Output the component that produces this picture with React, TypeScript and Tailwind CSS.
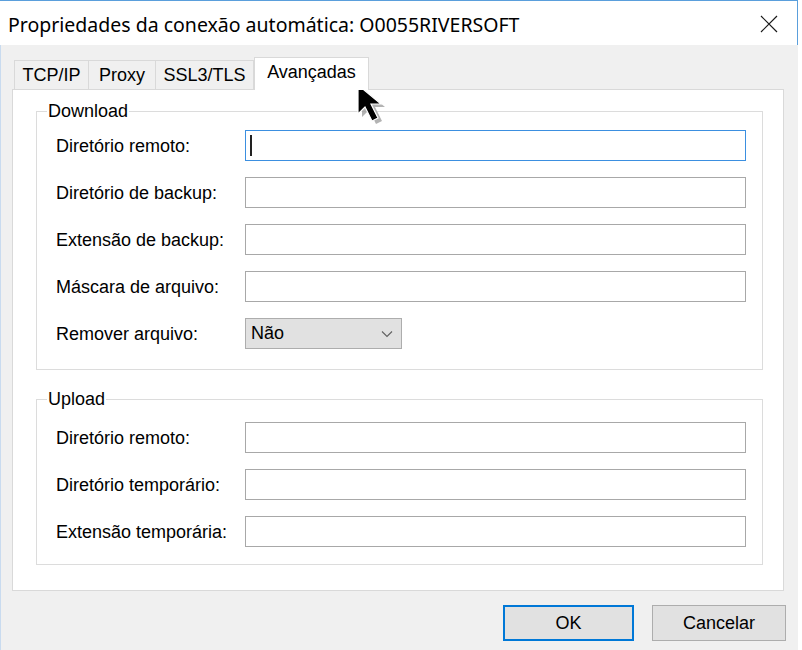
import React from "react";

const font = { fontFamily: '"Liberation Sans", Arial, sans-serif' };

function Field({ label, focused }: { label: string; focused?: boolean }) {
  return (
    <div className="flex items-center h-[31px]">
      <div className="w-[189px] text-[18px] leading-[22px] text-black">{label}</div>
      <div
        className={
          "w-[501px] h-[31px] bg-white border flex items-center " +
          (focused ? "border-[#3b8fe0]" : "border-[#a8a8a8]")
        }
      >
        {focused && <div className="ml-[4px] w-[2px] h-[21px] bg-[#222]" />}
      </div>
    </div>
  );
}

function Tab({ label, w, selected, right }: { label: string; w: string; selected?: boolean; right?: boolean }) {
  return (
    <div
      className={
        "flex items-center justify-center text-[18px] text-black border-t border-l border-[#d9d9d9] " +
        w +
        " " +
        (selected ? "h-[33px] bg-white border-r pb-[4px]" : "h-[29px] mb-[1px] bg-[#f0f0f0]") +
        (right ? " border-r" : "")
      }
    >
      {label}
    </div>
  );
}

export default function App() {
  return (
    <div className="w-[802px] h-[650px] bg-white relative overflow-hidden" style={font}>
      <div className="w-[798px] h-[650px] flex flex-col">
        {/* Title bar */}
        <div className="h-[45px] shrink-0 flex items-center justify-between bg-white border-t border-r border-[#5a9fdc] pl-[8px] pr-[19px]">
          <span
            className="text-[19.5px] text-black leading-[26px] mt-[3px]"
            style={{ fontFamily: '"Noto Sans", "Open Sans", sans-serif' }}
          >
            Propriedades da conexão automática: O0055RIVERSOFT
          </span>
          <svg width="18" height="18" viewBox="0 0 18 18" className="mt-[2px]">
            <path d="M1 1 L17 17 M17 1 L1 17" stroke="#1a1a1a" strokeWidth="1.2" fill="none" />
          </svg>
        </div>

        {/* Body */}
        <div className="flex-1 bg-[#f0f0f0] border-l border-[#c9dbef] flex flex-col">
          {/* Tabs */}
          <div className="relative z-10 flex items-end h-[33px] mt-[12px] -mb-px ml-[13px]">
            <Tab label="TCP/IP" w="w-[74px]" />
            <Tab label="Proxy" w="w-[67px]" />
            <Tab label="SSL3/TLS" w="w-[99px]" right />
            <Tab label="Avançadas" w="w-[115px]" selected />
          </div>

          {/* Panel */}
          <div className="ml-[11px] w-[772px] h-[502px] bg-white border border-[#d9d9d9] flex flex-col">
            {/* Download group */}
            <div className="ml-[23px] mt-[21px] w-[727px] border border-[#dcdcdc] flex flex-col pl-[19px] pb-[20px]">
              <span className="-mt-[12px] -ml-[9px] px-[1px] bg-white w-fit text-[18px] leading-[22px] text-black">
                Download
              </span>
              <div className="mt-[8px] flex flex-col gap-[16px]">
                <Field label="Diretório remoto:" focused />
                <Field label="Diretório de backup:" />
                <Field label="Extensão de backup:" />
                <Field label="Máscara de arquivo:" />
                <div className="flex items-center h-[31px]">
                  <div className="w-[189px] text-[18px] leading-[22px] text-black">Remover arquivo:</div>
                  <div className="w-[157px] h-[31px] bg-[#e1e1e1] border border-[#adadad] flex items-center justify-between pl-[5px] pr-[8px]">
                    <span className="text-[18px] text-black">Não</span>
                    <svg width="12" height="8" viewBox="0 0 12 8">
                      <path d="M1 1.5 L6 6.5 L11 1.5" stroke="#606060" strokeWidth="1.1" fill="none" />
                    </svg>
                  </div>
                </div>
              </div>
            </div>

            {/* Upload group */}
            <div className="ml-[23px] mt-[29px] w-[727px] border border-[#dcdcdc] flex flex-col pl-[19px] pb-[17px]">
              <span className="-mt-[12px] -ml-[9px] px-[1px] bg-white w-fit text-[18px] leading-[22px] text-black">
                Upload
              </span>
              <div className="mt-[12px] flex flex-col gap-[16px]">
                <Field label="Diretório remoto:" />
                <Field label="Diretório temporário:" />
                <Field label="Extensão temporária:" />
              </div>
            </div>
          </div>

          {/* Buttons */}
          <div className="mt-[14px] flex justify-end gap-[18px] w-[785px]">
            <div className="w-[131px] h-[36px] bg-[#e1e1e1] border-2 border-[#0078d7] flex items-center justify-center text-[18px] text-black">
              OK
            </div>
            <div className="w-[134px] h-[36px] bg-[#e1e1e1] border border-[#adadad] flex items-center justify-center text-[18px] text-black">
              Cancelar
            </div>
          </div>
        </div>
      </div>

      {/* Mouse cursor */}
      <svg className="absolute left-[356px] top-[83px]" width="40" height="46" viewBox="0 0 40 46">
        <path d="M6 5 L6 34 L13 27 L20 41 L26 38 L19 24 L29 24 Z" fill="#9a9a9a" opacity="0.75" />
        <path d="M2 2 L2 31 L9 24 L16 38 L22 35 L15 21 L25 21 Z" fill="#000" stroke="#fff" strokeWidth="1.2" />
      </svg>
    </div>
  );
}
